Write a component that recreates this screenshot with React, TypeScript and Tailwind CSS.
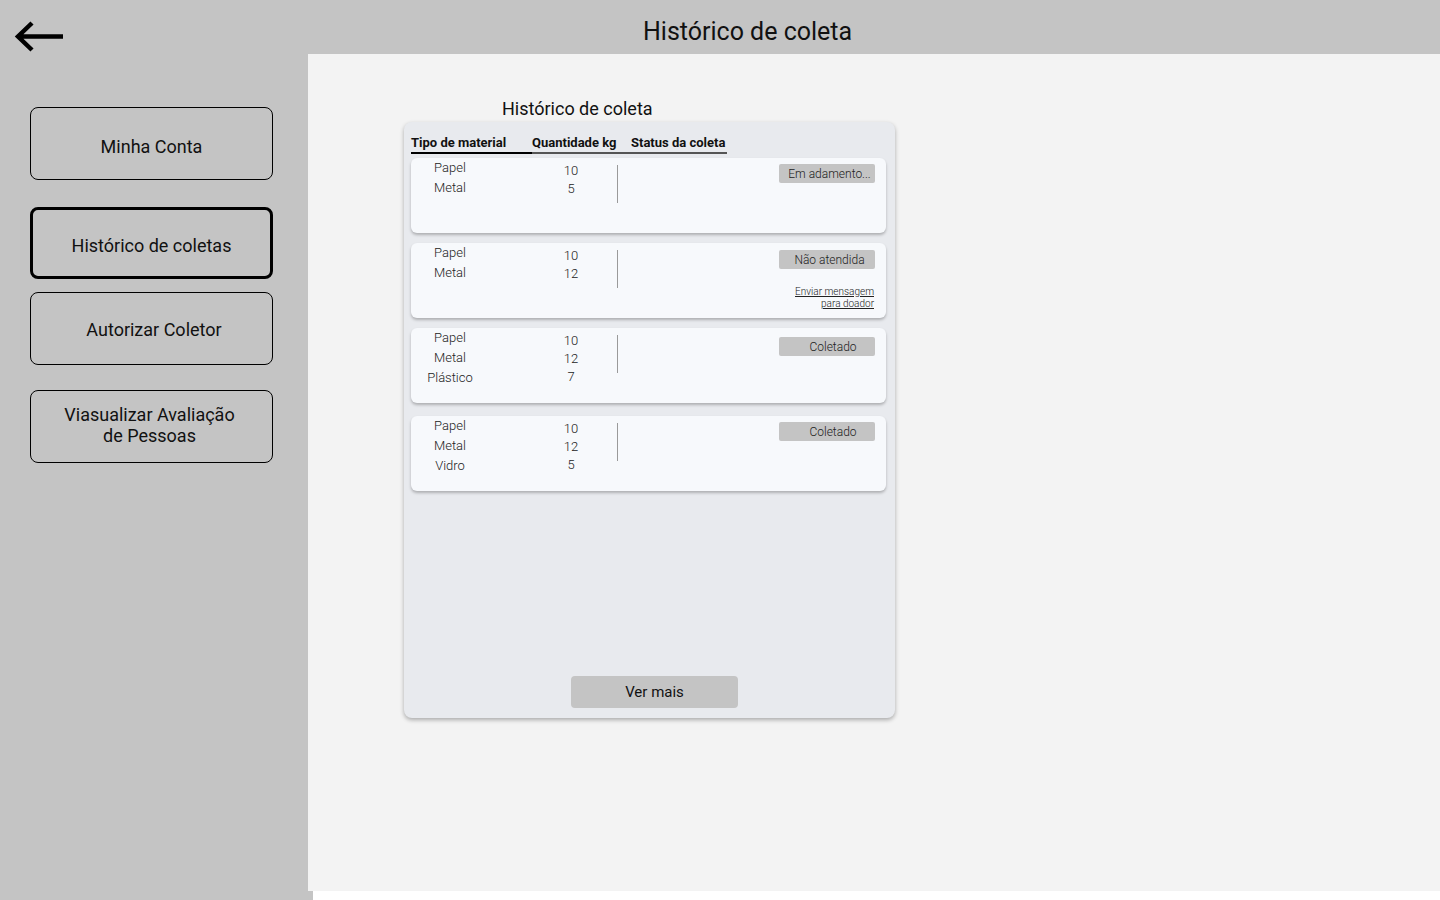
import React from "react";

type Item = { name: string; qty: string };

type Coleta = {
    items: Item[];
    status: string;
    message?: boolean;
    badgeTop: string;
    badgePad: string;
};

const coletas: Coleta[] = [
    {
        items: [{ name: "Papel", qty: "10" }, { name: "Metal", qty: "5" }],
        status: "Em adamento...",
        badgeTop: "mt-[6px]",
        badgePad: "pl-[5px]",
    },
    {
        items: [{ name: "Papel", qty: "10" }, { name: "Metal", qty: "12" }],
        status: "Não atendida",
        message: true,
        badgeTop: "mt-[7px]",
        badgePad: "pl-[5px]",
    },
    {
        items: [
            { name: "Papel", qty: "10" },
            { name: "Metal", qty: "12" },
            { name: "Plástico", qty: "7" },
        ],
        status: "Coletado",
        badgeTop: "mt-[9px]",
        badgePad: "pl-[12px]",
    },
    {
        items: [
            { name: "Papel", qty: "10" },
            { name: "Metal", qty: "12" },
            { name: "Vidro", qty: "5" },
        ],
        status: "Coletado",
        badgeTop: "mt-[6px]",
        badgePad: "pl-[12px]",
    },
];

const menu = [
    { label: "Minha Conta", active: false, className: "mt-[53px] h-[73px] pt-[6px]" },
    { label: "Histórico de coletas", active: true, className: "mt-[27px] h-[72px] pt-[4px]" },
    { label: "Autorizar Coletor", active: false, className: "mt-[13px] h-[73px] pl-[5px] pt-[2px]" },
    { label: "Viasualizar Avaliação\nde Pessoas", active: false, className: "mt-[25px] h-[73px] pr-[4px] pb-[4px]" },
];

function ColetaCard({ coleta, className }: { coleta: Coleta; className: string }) {
    return (
        <div className={`flex w-[475px] h-[75px] rounded-[6px] bg-[#f7f9fc] shadow-[0_2px_3px_rgba(0,0,0,0.25)] ${className}`}>
            <div className="w-[78px] text-center text-[13px] font-light leading-[20px] text-[#222]">
                {coleta.items.map((it) => (
                    <div key={it.name}>{it.name}</div>
                ))}
            </div>
            <div className="ml-[42px] w-[80px] pt-[4px] text-center text-[13px] font-light leading-[18px] text-[#222]">
                {coleta.items.map((it) => (
                    <div key={it.name}>{it.qty}</div>
                ))}
            </div>
            <div className="ml-[6px] mt-[7px] h-[38px] w-px bg-[#9a9a9a]" />
            <div className={`ml-auto mr-[11px] flex flex-col items-end ${coleta.badgeTop}`}>
                <div
                    className={`flex h-[19px] w-[96px] items-center justify-center rounded-[2px] bg-[#c4c4c4] text-[12px] font-light text-[#222] ${coleta.badgePad}`}
                >
                    {coleta.status}
                </div>
                {coleta.message && (
                    <div className="mt-[17px] mr-[1px] text-right text-[10px] font-light leading-[12px] text-[#222] underline">
                        Enviar mensagem
                        <br />
                        para doador
                    </div>
                )}
            </div>
        </div>
    );
}

export default function App() {
    return (
        <div className="w-[1440px] h-[900px] bg-white font-['Roboto',sans-serif] text-black overflow-hidden">
            <div className="flex h-[891px]">
                <aside className="flex w-[308px] flex-col bg-[#c4c4c4] pl-[30px]">
                    <svg className="-ml-[16px] mt-[20px]" width="50" height="34" viewBox="0 0 50 34" fill="none">
                        <path d="M49 16.5H5M18 3L4 16.5L18 30" stroke="#000" strokeWidth="4.5" />
                    </svg>
                    {menu.map((m) => (
                        <button
                            key={m.label}
                            className={`flex w-[243px] items-center justify-center whitespace-pre-line rounded-[8px] text-[18px] leading-[21px] text-[#111] ${
                                m.active ? "border-[3px] border-black" : "border border-black"
                            } ${m.className}`}
                        >
                            <span>{m.label}</span>
                        </button>
                    ))}
                </aside>
                <main className="flex flex-1 flex-col bg-[#f3f3f3]">
                    <header className="flex h-[54px] items-center bg-[#c4c4c4] pl-[335px] pt-[9px]">
                        <h1 className="text-[25px] text-[#111]">Histórico de coleta</h1>
                    </header>
                    <section className="pl-[96px] pt-[44px]">
                        <h2 className="pl-[98px] text-[18px] leading-[22px] text-[#111]">Histórico de coleta</h2>
                        <div className="mt-[2px] flex h-[596px] w-[491px] flex-col rounded-[8px] bg-[#e8eaee] px-[7px] pt-[12px] shadow-[0_2px_4px_rgba(0,0,0,0.3)]">
                            <div className="flex w-[316px] text-[13px] font-bold leading-[17px] text-[#111]">
                                <div className="w-[121px] border-b-2 border-black pb-[1px]">Tipo de material</div>
                                <div className="w-[99px] border-b-2 border-[#555] pb-[1px]">Quantidade kg</div>
                                <div className="flex-1 border-b-2 border-[#555] pb-[1px]">Status da coleta</div>
                            </div>
                            <ColetaCard coleta={coletas[0]} className="mt-[4px]" />
                            <ColetaCard coleta={coletas[1]} className="mt-[10px]" />
                            <ColetaCard coleta={coletas[2]} className="mt-[10px]" />
                            <ColetaCard coleta={coletas[3]} className="mt-[13px]" />
                            <button className="ml-[160px] mt-auto mb-[10px] flex h-[32px] w-[167px] items-center justify-center rounded-[4px] bg-[#c4c4c4] text-[15px] text-[#111]">
                                Ver mais
                            </button>
                        </div>
                    </section>
                </main>
            </div>
            <div className="h-[9px] w-[313px] bg-[#c4c4c4]" />
        </div>
    );
}
